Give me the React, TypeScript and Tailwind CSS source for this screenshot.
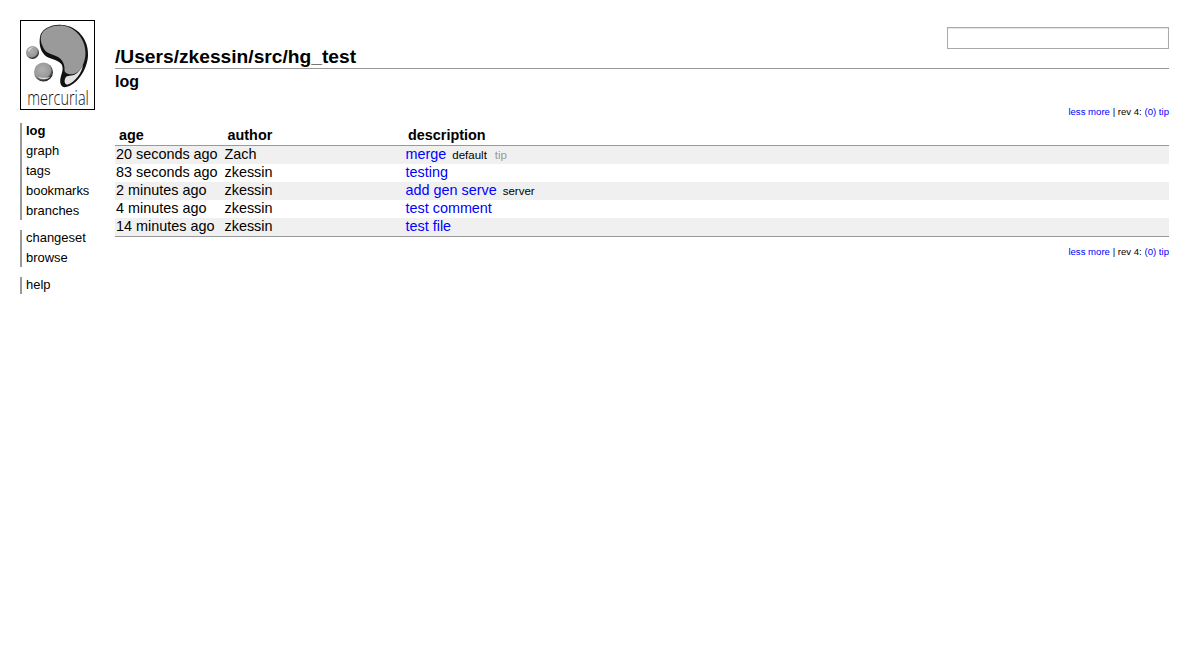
export default function App() {
  const rows = [
    { age: "20 seconds ago", author: "Zach", desc: "merge", tags: [["default", "text-black mr-[2px]"], ["tip", "text-[#999999]"]] },
    { age: "83 seconds ago", author: "zkessin", desc: "testing", tags: [] },
    { age: "2 minutes ago", author: "zkessin", desc: "add gen serve", tags: [["server", "text-black"]] },
    { age: "4 minutes ago", author: "zkessin", desc: "test comment", tags: [] },
    { age: "14 minutes ago", author: "zkessin", desc: "test file", tags: [] },
  ];
  const Nav = ({ items }: { items: string[] }) => (
    <ul className="border-l-2 border-[#999999] pl-1 mb-[10px] flex flex-col gap-[3px]">
      {items.map((t) => (
        <li key={t} className={`h-[17px] leading-[15px] ${t === "log" ? "font-bold" : ""}`}>{t}</li>
      ))}
    </ul>
  );
  const Pager = () => (
    <div className="text-right text-[9.6px] leading-[12px]">
      <span className="text-[#0000ff]">less more</span> | rev 4: <span className="text-[#0000ff]">(0)</span> <span className="text-[#0000ff]">tip</span>
    </div>
  );
  return (
    <div className="min-h-[670px] bg-white text-black flex pl-5 pr-8 pt-5 font-['Liberation_Sans',Arial,sans-serif] text-[14.4px]">
      <div className="w-[75px] shrink-0">
        <div className="w-[75px] h-[90px] border border-black mb-[13px]">
          <svg width="73" height="88" viewBox="1 1 73 88" className="overflow-visible">
            <defs>
              <radialGradient id="ball" cx="0.42" cy="0.38" r="0.62">
                <stop offset="0" stopColor="#b0b0b0" />
                <stop offset="0.72" stopColor="#989898" />
                <stop offset="0.88" stopColor="#444444" />
                <stop offset="1" stopColor="#222222" />
              </radialGradient>
            </defs>
            <path d="M20 17 C21 9 32 4 42 5 C58 6 69 20 68 36 C67 50 57 65 46 67 C41 68 39 63 41 56 C43 50 44 45 39 42 C33 38 27 39 23 33 C20 29 19 23 20 17 Z" fill="#111111" />
            <path d="M21 16 C23 8 33 5 42 5.5 C56 7 66 20 65.5 34 C65 44 60 52 54 54 C48 55 44.5 53 44.5 50 C45 44 42 39 37 36.5 C31 34 26 33 24 29 C22 25 20 21 21 16 Z" fill="#9a9a9a" />
            <path d="M45 59 C46 55 50 56 54 55 C58 53 61 49 63 45 C62 53 55 62 48 64.5 C45 65 44 62 45 59 Z" fill="#e4e4e4" />
            <circle cx="12.5" cy="32.5" r="6.5" fill="url(#ball)" />
            <path d="M8 30 C9 28 12 27 14 27 C12 28 10 29 9 32 Z" fill="#e0e0e0" />
            <circle cx="23.5" cy="52" r="9.5" fill="url(#ball)" />
            <path d="M18 57 C21 60 27 60 30 57 C27 58 21 58 18 57 Z" fill="#e0e0e0" />
            <text transform="translate(38 85) scale(1 1.4)" textAnchor="middle" fontFamily="'Open Sans',sans-serif" fontWeight="300" fontSize="14.5" fill="#111111">mercurial</text>
          </svg>
        </div>
        <div className="text-[12.96px]">
          <Nav items={["log", "graph", "tags", "bookmarks", "branches"]} />
          <Nav items={["changeset", "browse"]} />
          <Nav items={["help"]} />
        </div>
      </div>
      <div className="flex-1 ml-5 min-w-0">
        <div className="flex justify-between items-start border-b border-[#999999] h-[49px]">
          <h2 className="text-[19.2px] font-bold leading-6 pt-[25px]">/Users/zkessin/src/hg_test</h2>
          <input className="w-[222px] h-[22px] mt-[7px] border border-[#aaaaaa] shadow-[inset_0_1px_1px_#e4e4e4] bg-white" />
        </div>
        <h3 className="text-[16px] font-bold leading-5 mt-[3px] mb-[14px]">log</h3>
        <Pager />
        <table className="w-full border-separate border-spacing-0 mt-[8px] mb-[9px] border-b border-[#999999]">
          <thead>
            <tr className="text-left">
              <th className="h-[20px] align-top border-b border-[#999999] w-[108.5px] pl-1 leading-[18px] font-bold">age</th>
              <th className="h-[20px] align-top border-b border-[#999999] w-[180.5px] pl-[4px] leading-[18px] font-bold">author</th>
              <th className="h-[20px] align-top border-b border-[#999999] pl-[4px] leading-[18px] font-bold">description</th>
            </tr>
          </thead>
          <tbody>
            {rows.map((r, i) => (
              <tr key={r.age} className={`leading-[16px] ${i % 2 === 0 ? "bg-[#f0f0f0]" : "bg-white"}`}>
                <td className="h-[18px] pl-px align-top whitespace-nowrap">{r.age}</td>
                <td className="h-[18px] pl-px align-top">{r.author}</td>
                <td className="h-[18px] pl-[1.5px] align-top">
                  <span className="text-[#0000ff]">{r.desc}</span>
                  {r.tags.map(([t, c]) => (
                    <span key={t} className={`ml-[6px] text-[11.5px] leading-none ${c}`}>{t}</span>
                  ))}
                </td>
              </tr>
            ))}
          </tbody>
        </table>
        <Pager />
      </div>
    </div>
  );
}
